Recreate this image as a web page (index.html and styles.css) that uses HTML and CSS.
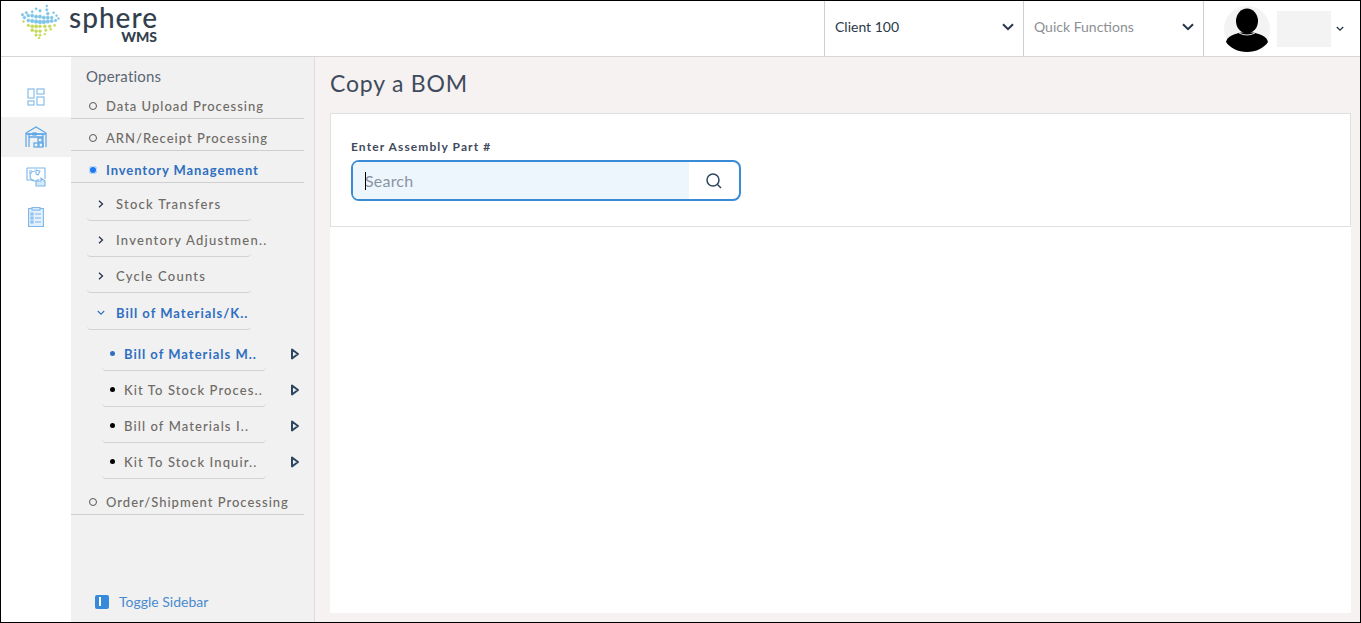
FILE: index.html
```html
<!DOCTYPE html>
<html lang="en">
<head>
<meta charset="utf-8">
<title>Copy a BOM</title>
<link rel="stylesheet" href="styles.css">
</head>
<body>
<div class="app">
  <header class="topbar">
    <div class="brand">
      <svg class="globe" width="42" height="36" viewBox="0 1 42 37">
        <g fill="#7cc4e8" stroke="#7cc4e8" stroke-width=".6">
          <circle cx="28" cy="4" r="1"/><circle cx="28" cy="8" r="1.2"/><circle cx="29" cy="12" r="1.4"/><circle cx="17" cy="7" r="1.1"/><circle cx="21" cy="9" r="1.3"/><circle cx="7" cy="11" r="1.2"/><circle cx="3" cy="13" r="1.3"/>
          <circle cx="5" cy="16" r="1.4"/><circle cx="9" cy="14" r="1.4"/><circle cx="13" cy="14" r="1.6"/><circle cx="17" cy="15" r="1.7"/><circle cx="21" cy="15" r="1.7"/><circle cx="25" cy="16" r="1.7"/><circle cx="29" cy="16" r="1.6"/><circle cx="33" cy="16" r="1.4"/><circle cx="38" cy="14" r="1"/>
          <circle cx="9" cy="19" r="1.5"/><circle cx="13" cy="19.5" r="1.8"/><circle cx="17" cy="20" r="1.9"/><circle cx="21" cy="20.5" r="1.9"/><circle cx="25" cy="20.5" r="1.9"/><circle cx="29" cy="20" r="1.8"/><circle cx="33" cy="19.5" r="1.6"/><circle cx="37" cy="19" r="1.3"/><circle cx="40" cy="17" r="1"/>
          <circle cx="13" cy="10" r="1.1"/><circle cx="35" cy="11" r="1"/>
        </g>
        <g fill="#c5d95a" stroke="#c5d95a" stroke-width=".6">
          <circle cx="9" cy="24" r="1.3"/><circle cx="13" cy="25" r="1.6"/><circle cx="17" cy="25" r="1.7"/><circle cx="21" cy="25" r="1.5"/><circle cx="26" cy="25" r="1.5"/><circle cx="31" cy="25" r="1.4"/><circle cx="36" cy="24" r="1.1"/>
          <circle cx="13" cy="29" r="1.5"/><circle cx="17" cy="30" r="1.5"/><circle cx="21" cy="30" r="1.4"/><circle cx="27" cy="29" r="1.2"/><circle cx="32" cy="28" r="1"/>
          <circle cx="17" cy="34" r="1.3"/><circle cx="21" cy="34" r="1.2"/><circle cx="20" cy="37" r="1"/><circle cx="26" cy="33" r="1"/><circle cx="4" cy="20" r="1"/>
        </g>
      </svg>
      <div class="wordmark">
        <span class="sphere">sphere</span>
        <span class="wms">WMS</span>
      </div>
    </div>
    <div class="drop drop-client">
      <span>Client 100</span>
      <svg class="chev" width="12" height="8" viewBox="0 0 12 8"><path d="M1 1.2l5 5 5-5" fill="none" stroke="#27344a" stroke-width="2"/></svg>
    </div>
    <div class="drop drop-quick">
      <span>Quick Functions</span>
      <svg class="chev" width="12" height="8" viewBox="0 0 12 8"><path d="M1 1.2l5 5 5-5" fill="none" stroke="#27344a" stroke-width="2"/></svg>
    </div>
    <div class="user">
      <svg class="avatar" width="46" height="46" viewBox="0 0 46 46">
        <circle cx="23" cy="23" r="23" fill="#f3f3f3"/>
        <ellipse cx="23" cy="15" rx="11" ry="12.5" fill="#000"/>
        <path d="M2 36c1-6 9-8 15-9.500h12c6 1.500 14 3.500 15 9.500-4 6-12 10-21 10S6 42 2 36z" fill="#000"/>
        <path d="M15 27q8 4 16 0" fill="none" stroke="#ddd" stroke-width="1"/>
      </svg>
      <div class="username"></div>
      <svg width="8" height="6" viewBox="0 0 8 6"><path d="M.8 1l3.200 3.200L7.200 1" fill="none" stroke="#27344a" stroke-width="1.300"/></svg>
    </div>
  </header>
  <div class="body">
    <nav class="rail">
      <div class="rail-item">
        <svg width="18" height="18" viewBox="0 0 18 18" fill="none" stroke="#7db6ea" stroke-width="1.100"><rect x="1" y="1" width="6" height="9"/><rect x="10" y="1" width="7" height="5"/><rect x="1" y="13" width="6" height="4"/><rect x="10" y="9" width="7" height="8"/></svg>
      </div>
      <div class="rail-item is-active">
        <svg width="22" height="22" viewBox="0 0 22 22" fill="none" stroke="#5aa5e6" stroke-width="1.200"><path d="M1 21V7l10-6 10 6v14"/><path d="M4 21V8h14v13"/><path d="M1 8h20M4 11h14" stroke-width="1.500"/><rect x="8" y="7" width="3" height="2"/><rect x="13" y="12" width="4" height="4"/><rect x="9" y="17" width="4" height="4"/><rect x="14" y="17" width="4" height="4"/></svg>
      </div>
      <div class="rail-item">
        <svg width="20" height="20" viewBox="0 0 20 20" fill="none" stroke="#7db6ea" stroke-width="1.100"><path d="M1 1h18v11M1 1v12h7"/><path d="M9 4a5 5 0 1 0 4 8"/><path d="M10 3l4 1-2 4-2-1z"/><path d="M10 14h5v-3l4 3v5h-9z" fill="#d6e9fa"/><path d="M3 4h3M3 6h2"/></svg>
      </div>
      <div class="rail-item">
        <svg width="16" height="20" viewBox="0 0 16 20" fill="#e4f1fc" stroke="#7db6ea" stroke-width="1.100"><rect x=".6" y="1.500" width="14.800" height="18"/><rect x="4" y=".6" width="8" height="2.500"/><path d="M3 6h2v2H3zM3 10h2v2H3zM3 14h2v2H3zM7 7h6M7 11h6M7 15h6" fill="none"/></svg>
      </div>
    </nav>
    <aside class="sidebar">
      <div class="side-title">Operations</div>
      <a class="row-main"><i class="ring"></i>Data Upload Processing</a>
      <a class="row-main"><i class="ring"></i>ARN/Receipt Processing</a>
      <a class="row-main is-on"><i class="ring-on"></i>Inventory Management</a>
      <div class="subs">
        <a class="row-sub"><svg class="caret-r" width="6" height="8" viewBox="0 0 6 8"><path d="M1 .8l3.500 3.200L1 7.200" fill="none" stroke="#27344a" stroke-width="1.300"/></svg>Stock Transfers</a>
        <a class="row-sub"><svg class="caret-r" width="6" height="8" viewBox="0 0 6 8"><path d="M1 .8l3.500 3.200L1 7.200" fill="none" stroke="#27344a" stroke-width="1.300"/></svg>Inventory Adjustmen..</a>
        <a class="row-sub"><svg class="caret-r" width="6" height="8" viewBox="0 0 6 8"><path d="M1 .8l3.500 3.200L1 7.200" fill="none" stroke="#27344a" stroke-width="1.300"/></svg>Cycle Counts</a>
        <a class="row-sub is-on"><svg class="caret-r" width="8" height="6" viewBox="0 0 8 6"><path d="M.8 1l3.200 3.200L7.200 1" fill="none" stroke="#2f6fc0" stroke-width="1.100"/></svg>Bill of Materials/K..</a>
      </div>
      <div class="leaves">
        <div class="leaf-wrap"><a class="row-leaf is-on"><i class="dot"></i>Bill of Materials M..</a><svg class="play" width="10" height="12" viewBox="0 0 10 12"><path d="M2 1.500l6 4.500-6 4.500z" fill="none" stroke="#2d4560" stroke-width="2" stroke-linejoin="round"/></svg></div>
        <div class="leaf-wrap"><a class="row-leaf"><i class="dot"></i>Kit To Stock Proces..</a><svg class="play" width="10" height="12" viewBox="0 0 10 12"><path d="M2 1.500l6 4.500-6 4.500z" fill="none" stroke="#2d4560" stroke-width="2" stroke-linejoin="round"/></svg></div>
        <div class="leaf-wrap"><a class="row-leaf"><i class="dot"></i>Bill of Materials I..</a><svg class="play" width="10" height="12" viewBox="0 0 10 12"><path d="M2 1.500l6 4.500-6 4.500z" fill="none" stroke="#2d4560" stroke-width="2" stroke-linejoin="round"/></svg></div>
        <div class="leaf-wrap"><a class="row-leaf"><i class="dot"></i>Kit To Stock Inquir..</a><svg class="play" width="10" height="12" viewBox="0 0 10 12"><path d="M2 1.500l6 4.500-6 4.500z" fill="none" stroke="#2d4560" stroke-width="2" stroke-linejoin="round"/></svg></div>
      </div>
      <a class="row-main row-last"><i class="ring"></i>Order/Shipment Processing</a>
      <a class="toggle"><span class="toggle-icon"><i></i></span>Toggle Sidebar</a>
    </aside>
    <main class="content">
      <h1 class="page-title">Copy a BOM</h1>
      <div class="panel">
        <section class="card">
          <label class="field-label" for="part">Enter Assembly Part #</label>
          <div class="searchbox">
            <input id="part" class="search-input" type="text" placeholder="Search">
            <i class="text-caret"></i>
            <span class="search-btn">
              <svg width="18" height="18" viewBox="0 0 18 18" fill="none" stroke="#2d4560" stroke-width="1.500"><circle cx="8" cy="8" r="6"/><path d="M12.500 12.500L16 16"/></svg>
            </span>
          </div>
        </section>
      </div>
    </main>
  </div>
</div>
</body>
</html>
```
FILE: styles.css
```css
* { box-sizing: border-box; }
html, body { margin: 0; height: 100%; overflow: hidden; }
body { font-family: Lato, "Open Sans", sans-serif; background: #fff; }
.app { width: 1361px; height: 623px; border: 1px solid #000; display: flex; flex-direction: column; }

.topbar { height: 56px; flex: none; display: flex; align-items: stretch; border-bottom: 1px solid #d6d6d6; background: #fff; }
.brand { width: 823px; display: flex; align-items: flex-start; padding: 2px 0 0 18px; }
.globe { margin-right: 8px; }
.wordmark { display: flex; flex-direction: column; align-items: flex-end; color: #333f4d; }
.sphere { font-size: 28px; line-height: 24px; font-weight: 500; letter-spacing: 1px; margin: 2px -1px 0 0; }
.wms { font-size: 14px; font-weight: 900; line-height: 14px; margin-top: 1px; }
.drop { display: flex; align-items: center; justify-content: space-between; border-left: 1px solid #cfcfcf; font-size: 14px; padding: 0 9px 4px 10px; }
.drop-client { width: 199px; color: #2b3a4a; }
.drop-quick { width: 180px; color: #8d8f93; }
.user { flex: 1; display: flex; align-items: center; border-left: 1px solid #cfcfcf; padding-left: 20px; }
.avatar { flex: none; }
.username { width: 54px; height: 36px; background: #f3f3f3; margin: 0 5px 0 7px; }

.body { flex: 1; display: flex; min-height: 0; }
.rail { width: 70px; flex: none; padding-top: 20px; background: #fff; display: flex; flex-direction: column; }
.rail-item { height: 40px; display: flex; align-items: center; justify-content: center; }
.is-active { background: #f1f1f1; }

.sidebar { width: 244px; flex: none; background: #f1f1f1; border-right: 1px solid #dcdcdc; display: flex; flex-direction: column; }
.side-title { height: 30px; padding: 10px 0 0 15px; font-size: 15px; line-height: 18px; letter-spacing: .2px; color: #5b6673; }
a { text-decoration: none; color: inherit; }
.row-main { width: 233px; height: 32px; flex: none; display: flex; align-items: center; padding: 6px 0 0 18px; border-bottom: 1px solid #cfcfcf; font-size: 13px; font-weight: 500; letter-spacing: 1px; color: #6e6a66; }
.row-main.is-on { color: #2f6fc0; font-weight: 700; letter-spacing: .9px; }
.ring { width: 8px; height: 8px; border: 1.500px solid #555; border-radius: 50%; margin-right: 9px; flex: none; }
.ring-on { width: 8px; height: 8px; border-radius: 50%; background: #1f7af0; box-shadow: inset 0 0 0 1px #cfe4fb; margin-right: 9px; flex: none; }
.subs { padding: 2px 0 0 16px; }
.row-sub { width: 164px; height: 36px; display: flex; align-items: center; padding: 3px 0 0 10px; white-space: nowrap; border-bottom: 1px solid #d2d2d2; border-radius: 0 0 4px 4px; font-size: 13px; font-weight: 500; letter-spacing: 1.250px; color: #6e6a66; }
.caret-r { width: 8px; margin-right: 11px; flex: none; }
.row-sub.is-on { height: 37px; margin-bottom: 5px; color: #2f6fc0; font-weight: 700; letter-spacing: 1px; }
.leaves { padding-left: 31px; }
.leaf-wrap { display: flex; align-items: center; height: 36px; }
.row-leaf { width: 164px; height: 36px; display: flex; align-items: center; padding: 2px 0 0 8px; white-space: nowrap; border-bottom: 1px solid #d2d2d2; border-radius: 0 0 4px 4px; font-size: 13px; font-weight: 500; letter-spacing: 1.100px; color: #6e6a66; flex: none; }
.row-leaf.is-on { color: #2f6fc0; font-weight: 700; letter-spacing: 1px; }
.dot { width: 5px; height: 5px; border-radius: 50%; background: #000; margin-right: 9px; flex: none; }
.is-on .dot { background: #2f6fc0; }
.play { margin-left: 24px; margin-top: 2px; flex: none; }
.row-last { height: 36px; padding-top: 11px; }
.toggle { margin-top: auto; height: 41px; padding: 0 0 0 24px; display: flex; align-items: center; font-size: 14px; color: #4a8ad0; }
.toggle-icon { width: 14px; height: 14px; border-radius: 2px; background: #358bd9; margin-right: 10px; display: flex; align-items: center; padding-left: 4px; }
.toggle-icon i { width: 2px; height: 9px; background: #fff; }

.content { flex: 1; min-width: 0; background: #f6f2f1; padding: 0 9px 9px 15px; display: flex; flex-direction: column; }
.page-title { margin: 0; height: 56px; padding-top: 11px; font-size: 23px; line-height: 30px; font-weight: 400; letter-spacing: .8px; color: #3f4b5c; }
.panel { flex: 1; background: #fff; }
.card { height: 114px; border: 1px solid #e0e0e0; padding: 25px 20px 0; display: flex; flex-direction: column; align-items: flex-start; }
.field-label { font-size: 12px; line-height: 16px; font-weight: 700; letter-spacing: 1.100px; color: #3f4b5c; margin-bottom: 5px; }
.searchbox { position: relative; width: 390px; height: 41px; border: 2px solid #3a8bd6; border-radius: 8px; display: flex; background: #fff; }
.search-input { width: 336px; height: 37px; border: 0; outline: 0; background: #eef6fd; padding: 0 0 0 12px; font: 400 16px Lato, sans-serif; letter-spacing: .2px; color: #333; border-radius: 5px 0 0 5px; }
.search-input::placeholder { color: #8a93a3; opacity: 1; }
.text-caret { position: absolute; left: 12px; top: 10px; width: 1px; height: 18px; background: #000; }
.search-btn { flex: 1; display: flex; align-items: center; justify-content: center; }
```
